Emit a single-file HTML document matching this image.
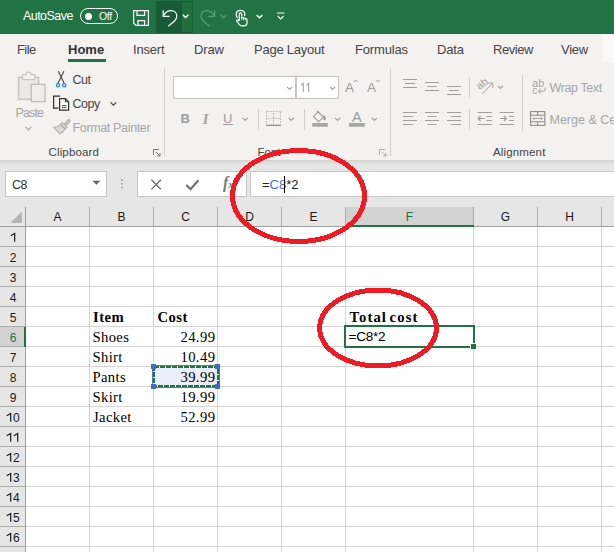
<!DOCTYPE html>
<html>
<head>
<meta charset="utf-8">
<title>Excel</title>
<style>
html,body{margin:0;padding:0;}
body{width:614px;height:552px;overflow:hidden;position:relative;background:#fff;font-family:"Liberation Sans",sans-serif;}
.abs{position:absolute;}
.t{position:absolute;white-space:nowrap;line-height:1;}
.tab{font-size:13px;color:#444;top:43px;}
.rl{font-size:12.5px;color:#444;}
.gl{font-size:11.5px;color:#444;top:147px;}
.dis{color:#a6a6a6;}
.box{position:absolute;background:#fff;border:1px solid #c4c4c4;box-sizing:border-box;}
.ch{position:absolute;top:207px;height:20px;font-size:12px;color:#1a1a1a;text-align:center;line-height:21px;}
.rh{position:absolute;left:0.5px;width:25px;height:20px;font-size:12px;color:#1a1a1a;text-align:center;line-height:22px;}
.cell{position:absolute;font-family:"Liberation Serif",serif;font-size:14.67px;color:#000;line-height:20px;height:20px;white-space:nowrap;letter-spacing:0.35px;}
.b{font-weight:bold;letter-spacing:0.45px;}
.r{text-align:right;}
</style>
</head>
<body>

<div class="abs" style="left:0;top:0;width:614px;height:34px;background:#217346;"></div>
<div class="abs" style="left:0;top:34px;width:614px;height:126px;background:#f3f2f1;"></div>
<div class="abs" style="left:603px;top:34px;width:11px;height:28px;background:#faf9f8;"></div>
<div class="abs" style="left:0;top:160px;width:614px;height:47px;background:#e6e6e6;"></div>
<div class="abs" style="left:0;top:160px;width:614px;height:5px;background:linear-gradient(#d2d2d2,#dcdcdc 40%,#e6e6e6);"></div>

<div class="abs" style="left:156px;top:1px;width:37px;height:32px;background:#185c37;"></div>
<div class="abs" style="left:182px;top:2px;width:10px;height:30px;background:#20703f;"></div>
<div class="t" style="left:23px;top:10px;font-size:12.5px;color:#fff;letter-spacing:-0.55px;">AutoSave</div>
<div class="abs" style="left:80px;top:8px;width:38px;height:16px;border:1px solid #fff;border-radius:8px;box-sizing:border-box;"></div>
<div class="abs" style="left:84.5px;top:12.5px;width:7px;height:7px;border-radius:3.5px;background:#fff;"></div>
<div class="t" style="left:99px;top:11px;font-size:10.5px;color:#fff;letter-spacing:-0.3px;">Off</div>

<div class="t tab" style="left:17px;letter-spacing:-0.6px;">File</div>
<div class="t tab" style="left:68px;font-weight:bold;color:#333;">Home</div>
<div class="abs" style="left:68px;top:59px;width:38px;height:3px;background:#217346;"></div>
<div class="t tab" style="left:133px;letter-spacing:-0.2px;">Insert</div>
<div class="t tab" style="left:194px;letter-spacing:-0.15px;">Draw</div>
<div class="t tab" style="left:254px;letter-spacing:-0.25px;">Page Layout</div>
<div class="t tab" style="left:355px;letter-spacing:-0.17px;">Formulas</div>
<div class="t tab" style="left:437px;letter-spacing:-0.2px;">Data</div>
<div class="t tab" style="left:493px;letter-spacing:-0.43px;">Review</div>
<div class="t tab" style="left:561px;letter-spacing:-0.27px;">View</div>

<div class="t rl dis" style="left:15.5px;top:107px;letter-spacing:-0.85px;">Paste</div>
<div class="t rl" style="left:72.5px;top:74px;letter-spacing:-0.55px;">Cut</div>
<div class="t rl" style="left:72.5px;top:98px;letter-spacing:-0.5px;">Copy</div>
<div class="t rl dis" style="left:72.5px;top:121.5px;letter-spacing:-0.35px;">Format Painter</div>
<div class="t gl" style="left:48.5px;letter-spacing:0.15px;">Clipboard</div>
<div class="abs" style="left:164px;top:68px;width:1px;height:88px;background:#d2d0ce;"></div>
<div class="box" style="left:173px;top:76px;width:123px;height:23px;"></div>
<div class="box" style="left:296px;top:76px;width:43px;height:23px;"></div>
<div class="t gl" style="left:257.5px;">Font</div>
<div class="abs" style="left:390px;top:68px;width:1px;height:88px;background:#d2d0ce;"></div>
<div class="t rl dis" style="left:549.5px;top:81.5px;letter-spacing:-0.4px;">Wrap Text</div>
<div class="t rl dis" style="left:549.5px;top:113.5px;">Merge &amp; Center</div>
<div class="t gl" style="left:493px;letter-spacing:0.15px;">Alignment</div>
<div class="t" style="left:180.5px;top:112px;font-size:13px;font-weight:bold;color:#9c9c9c;">B</div>
<div class="t" style="left:202.5px;top:110.5px;font-size:15.5px;font-style:italic;font-weight:bold;font-family:'Liberation Serif',serif;color:#a6a6a6;">I</div>
<div class="t" style="left:223px;top:111.5px;font-size:13px;color:#9c9c9c;">U</div>
<div class="abs" style="left:223px;top:124px;width:9.5px;height:1px;background:#9c9c9c;"></div>
<div class="t" style="left:345px;top:81px;font-size:13.5px;color:#9c9c9c;">A</div>
<div class="t" style="left:367px;top:81px;font-size:13.5px;color:#9c9c9c;">A</div>
<div class="t" style="left:352px;top:109.5px;font-size:14.5px;color:#9c9c9c;">A</div>

<div class="box" style="left:5px;top:171px;width:102px;height:26px;border-color:#c6c6c6;"></div>
<div class="t" style="left:12px;top:178.5px;font-size:12.5px;color:#333;letter-spacing:-0.5px;">C8</div>
<div class="box" style="left:137px;top:171px;width:110px;height:26px;border-color:#c6c6c6;"></div>
<div class="box" style="left:250px;top:171px;width:370px;height:26px;border-color:#c6c6c6;"></div>
<div class="t" style="left:262px;top:178px;font-size:13px;color:#222;">=<span style="color:#4472c4">C8</span>*2</div>
<div class="abs" style="left:284px;top:176px;width:1px;height:17px;background:#000;"></div>
<div class="t" style="left:223px;top:175px;font-size:16px;font-style:italic;font-weight:bold;font-family:'Liberation Serif',serif;color:#7a7a7a;">f<span style="font-size:11px;">x</span></div>
<svg class="abs" width="614" height="346" style="left:0;top:206px" shape-rendering="crispEdges">
<rect x="0" y="1" width="614" height="20" fill="#e6e6e6"/>
<rect x="0" y="1" width="25" height="345" fill="#e6e6e6"/>
<rect x="346" y="1" width="127" height="20" fill="#d2d2d2"/>
<rect x="0" y="121" width="25" height="20" fill="#d2d2d2"/>
<path d="M26 40.5H614M26 60.5H614M26 80.5H614M26 100.5H614M26 120.5H614M26 140.5H614M26 160.5H614M26 180.5H614M26 200.5H614M26 220.5H614M26 240.5H614M26 260.5H614M26 280.5H614M26 300.5H614M26 320.5H614M26 340.5H614M89.5 21V346M153.5 21V346M217.5 21V346M281.5 21V346M345.5 21V346M473.5 21V346M537.5 21V346M601.5 21V346" stroke="#d4d4d4" stroke-width="1" fill="none"/>
<path d="M89.5 1V20M153.5 1V20M217.5 1V20M281.5 1V20M345.5 1V20M473.5 1V20M537.5 1V20M601.5 1V20M0 40.5H25M0 60.5H25M0 80.5H25M0 100.5H25M0 120.5H25M0 140.5H25M0 160.5H25M0 180.5H25M0 200.5H25M0 220.5H25M0 240.5H25M0 260.5H25M0 280.5H25M0 300.5H25M0 320.5H25M0 340.5H25" stroke="#ababab" stroke-width="1" fill="none"/>
<path d="M0 20.5H614M25.5 1V346" stroke="#a0a0a0" stroke-width="1" fill="none"/>
<polygon points="10.5,17 22,17 22,5.5" fill="#b4b4b4" shape-rendering="auto"/>
<rect x="346" y="19" width="128" height="2" fill="#217346"/>
<rect x="24" y="121" width="2" height="20" fill="#217346"/>
</svg><div class="ch" style="left:26px;width:63px;">A</div>
<div class="ch" style="left:90px;width:63px;">B</div>
<div class="ch" style="left:154px;width:63px;">C</div>
<div class="ch" style="left:218px;width:63px;">D</div>
<div class="ch" style="left:282px;width:63px;">E</div>
<div class="ch" style="left:346px;width:127px;color:#217346;">F</div>
<div class="ch" style="left:474px;width:63px;">G</div>
<div class="ch" style="left:538px;width:63px;">H</div>
<div class="rh" style="top:227px;"><svg width="6.67" height="8.7" viewBox="0 0 6.67 8.7" style="vertical-align:baseline;overflow:visible"><path d="M0.7 2.8L4.7 0.5V8.7" fill="none" stroke="#1a1a1a" stroke-width="1.2"/></svg></div>
<div class="rh" style="top:247px;">2</div>
<div class="rh" style="top:267px;">3</div>
<div class="rh" style="top:287px;">4</div>
<div class="rh" style="top:307px;">5</div>
<div class="rh" style="top:327px;color:#217346;">6</div>
<div class="rh" style="top:347px;">7</div>
<div class="rh" style="top:367px;">8</div>
<div class="rh" style="top:387px;">9</div>
<div class="rh" style="top:407px;"><svg width="6.67" height="8.7" viewBox="0 0 6.67 8.7" style="vertical-align:baseline;overflow:visible"><path d="M0.7 2.8L4.7 0.5V8.7" fill="none" stroke="#1a1a1a" stroke-width="1.2"/></svg>0</div>
<div class="rh" style="top:427px;"><svg width="6.67" height="8.7" viewBox="0 0 6.67 8.7" style="vertical-align:baseline;overflow:visible"><path d="M0.7 2.8L4.7 0.5V8.7" fill="none" stroke="#1a1a1a" stroke-width="1.2"/></svg><svg width="6.67" height="8.7" viewBox="0 0 6.67 8.7" style="vertical-align:baseline;overflow:visible"><path d="M0.7 2.8L4.7 0.5V8.7" fill="none" stroke="#1a1a1a" stroke-width="1.2"/></svg></div>
<div class="rh" style="top:447px;"><svg width="6.67" height="8.7" viewBox="0 0 6.67 8.7" style="vertical-align:baseline;overflow:visible"><path d="M0.7 2.8L4.7 0.5V8.7" fill="none" stroke="#1a1a1a" stroke-width="1.2"/></svg>2</div>
<div class="rh" style="top:467px;"><svg width="6.67" height="8.7" viewBox="0 0 6.67 8.7" style="vertical-align:baseline;overflow:visible"><path d="M0.7 2.8L4.7 0.5V8.7" fill="none" stroke="#1a1a1a" stroke-width="1.2"/></svg>3</div>
<div class="rh" style="top:487px;"><svg width="6.67" height="8.7" viewBox="0 0 6.67 8.7" style="vertical-align:baseline;overflow:visible"><path d="M0.7 2.8L4.7 0.5V8.7" fill="none" stroke="#1a1a1a" stroke-width="1.2"/></svg>4</div>
<div class="rh" style="top:507px;"><svg width="6.67" height="8.7" viewBox="0 0 6.67 8.7" style="vertical-align:baseline;overflow:visible"><path d="M0.7 2.8L4.7 0.5V8.7" fill="none" stroke="#1a1a1a" stroke-width="1.2"/></svg>5</div>
<div class="rh" style="top:527px;"><svg width="6.67" height="8.7" viewBox="0 0 6.67 8.7" style="vertical-align:baseline;overflow:visible"><path d="M0.7 2.8L4.7 0.5V8.7" fill="none" stroke="#1a1a1a" stroke-width="1.2"/></svg>6</div>
<div class="rh" style="top:547px;"><svg width="6.67" height="8.7" viewBox="0 0 6.67 8.7" style="vertical-align:baseline;overflow:visible"><path d="M0.7 2.8L4.7 0.5V8.7" fill="none" stroke="#1a1a1a" stroke-width="1.2"/></svg>7</div>

<div class="cell b" style="left:93px;top:307px;">Item</div>
<div class="cell b" style="left:157.5px;top:307px;">Cost</div>
<div class="cell" style="left:92.5px;top:327px;">Shoes</div>
<div class="cell" style="left:92.5px;top:347px;">Shirt</div>
<div class="cell" style="left:92.5px;top:367px;">Pants</div>
<div class="cell" style="left:92.5px;top:387px;">Skirt</div>
<div class="cell" style="left:93px;top:407px;">Jacket</div>
<svg class="abs" width="80" height="40" style="left:145px;top:358px;">
<rect x="8" y="8" width="66" height="22" fill="#e9eef9"/>
<rect x="7.5" y="7.5" width="67" height="22" fill="none" stroke="#4a78cf" stroke-width="1"/>
<rect x="9" y="9" width="64" height="19" fill="none" stroke="#217346" stroke-width="2" stroke-dasharray="5 1"/>
<rect x="6" y="6" width="5" height="5" fill="#3b6ec9"/><rect x="70" y="6" width="5" height="5" fill="#3b6ec9"/>
<rect x="6" y="26" width="5" height="5" fill="#3b6ec9"/><rect x="70" y="26" width="5" height="5" fill="#3b6ec9"/>
</svg>
<div class="cell r" style="left:153px;width:62.4px;letter-spacing:0.4px;top:327px;">24.99</div>
<div class="cell r" style="left:153px;width:62.4px;letter-spacing:0.4px;top:347px;">10.49</div>
<div class="cell r" style="left:153px;width:62.4px;letter-spacing:0.4px;top:367px;">39.99</div>
<div class="cell r" style="left:153px;width:62.4px;letter-spacing:0.4px;top:387px;">19.99</div>
<div class="cell r" style="left:153px;width:62.4px;letter-spacing:0.4px;top:407px;">52.99</div>
<div class="cell b" style="left:349.5px;top:307px;letter-spacing:1.1px;word-spacing:-2.2px;">Total cost</div>
<div class="abs" style="left:344px;top:325px;width:131px;height:23px;border:2px solid #217346;box-sizing:border-box;background:#fff;"></div>
<div class="abs" style="left:470px;top:343px;width:6px;height:6px;background:#fff;"></div>
<div class="abs" style="left:471px;top:344px;width:5px;height:5px;background:#217346;"></div>
<div class="cell" style="left:348.5px;top:327px;font-family:'Liberation Sans',sans-serif;font-size:13.6px;letter-spacing:-0.3px;">=C8*2</div>
<svg class="abs" width="614" height="210" style="left:0;top:0;" fill="none" stroke-linecap="butt">
<!-- title bar icons -->
<g stroke="#fff" stroke-width="1.2">
<path d="M133.6 10.6H148.4V25.4H136L133.6 23Z"/>
<path d="M137 10.6V15.4H144.6V10.6M138 25.4V20.6H144.6V25.4"/>
<path d="M163.2 10.3V16.4H169.6"/>
<path d="M163.5 16C165 12.6 168 10.6 171 10.6C174.5 10.6 176.8 13 176.8 16C176.8 18 176 19.5 174.5 21L168.3 26.2"/>
<path d="M182.8 14.7L185.6 17.5L188.4 14.7" stroke-width="1.4"/>
<path d="M256.7 14.9L259.5 17.7L262.3 14.9" stroke-width="1.4"/>
<path d="M277 13H284.4M277.8 16L280.7 18.9L283.6 16" stroke-width="1.1"/>
<!-- touch -->
<path d="M237.6 17.6C236.6 16.7 236.2 15.6 236.2 14.4C236.2 12 238.1 10.4 240.5 10.4C242.9 10.4 244.8 12 244.8 14.4C244.8 15 244.7 15.5 244.5 16"/>
<path d="M239.3 21V14.2C239.3 13.4 239.8 12.9 240.5 12.9C241.2 12.9 241.7 13.4 241.7 14.2V17.6L245.6 18.4C246.5 18.6 247 19.2 247 20V22.5C247 24.5 245.5 25.8 243.8 25.8H241.8C240.8 25.8 240 25.4 239.4 24.6L236.8 21.2C236.4 20.6 236.6 20 237.2 19.8C237.8 19.6 238.3 19.9 238.7 20.3L239.3 21"/>
<path d="M241.7 17.6V20M243.5 18V20.2M245.3 18.5V20.4" stroke-width="0.8"/>
</g>
<g stroke="#5a9e7a" stroke-width="1.2">
<path d="M214.6 10.3V16.4H208.2"/>
<path d="M214.3 16C212.8 12.6 209.8 10.6 206.8 10.6C203.3 10.6 201 13 201 16C201 18 201.8 19.5 203.3 21L209.5 26.2"/>
<path d="M220.7 14.9L223.5 17.7L226.3 14.9" stroke-width="1.4"/>
</g>

<!-- Paste icon -->
<rect x="18.6" y="77.3" width="20" height="22" fill="#eae9e8" stroke="#c8c6c4" stroke-width="1.6"/>
<path d="M22.6 79.6V74.6H26.1C26.1 73.1 27.2 72.2 28.6 72.2C30 72.2 31.1 73.1 31.1 74.6H34.7V79.6Z" fill="#f3f2f1" stroke="#c8c6c4" stroke-width="1.2"/>
<rect x="31.2" y="84.3" width="13.8" height="17.4" fill="#eeedec" stroke="#b5b3b1" stroke-width="1.1"/>
<path d="M25.6 127L28.4 129.8L31.2 127" stroke="#a6a6a6" stroke-width="1.2"/>
<!-- scissors -->
<g stroke="#484644" stroke-width="1.1">
<path d="M58.3 71.3L64.3 83.6M63.9 71.3L57.9 83.6"/>
</g>
<circle cx="58" cy="85.2" r="1.6" stroke="#2b88d8" stroke-width="1.3"/>
<circle cx="64.2" cy="85.2" r="1.6" stroke="#2b88d8" stroke-width="1.3"/>
<!-- copy -->
<g stroke="#323130" stroke-width="1.2">
<path d="M60.2 96.1H53.6V108.1H58.6"/>
<path d="M59.6 98.6H65.4L68.6 101.8V110.1H59.6Z" fill="#fff"/>
<path d="M65.4 98.6V101.8H68.6" stroke-width="1"/>
<path d="M62 105.6H66.4M62 107.6H66.4" stroke-width="0.9"/>
<path d="M110.6 102.4L113.4 105.2L116.2 102.4" stroke="#484644" stroke-width="1.3"/>
</g>
<!-- format painter -->
<g stroke="#b3b1af" stroke-width="1.1" fill="#dcdad8">
<path d="M64.2 124.4L67.6 120.4C68.2 119.7 69 119.7 69.4 120.2C69.9 120.7 69.8 121.4 69.2 122L65.6 125.6" fill="none" stroke-width="1.6"/>
<path d="M62.2 122.6L67 127.2L65.2 129L60.4 124.4Z"/>
<path d="M60.2 124.6L65 129.2C64 131 62 133 59.8 133.6L53.8 127.4C56.5 127.4 58.6 126.4 60.2 124.6Z"/>
</g>
<!-- dialog launchers -->
<g stroke="#7a7876" stroke-width="1">
<path d="M153.5 155V149.5H159M156 152L159.8 155.8M160 153V156H157"/>
</g>
<g stroke="#b3b1af" stroke-width="1">
<path d="M379.5 155V149.5H385M382 152L385.8 155.8M386 153V156H383"/>
</g>
<!-- separators -->
<g stroke="#d0cecc" stroke-width="1">
<path d="M258.5 109V129.5M304.5 109V129.5M469.5 77.5V97.5M469.5 109V129.5M522.5 74.5V131.5"/>
</g>
<!-- chevrons ribbon (disabled) -->
<g stroke="#a19f9d" stroke-width="1.1">
<path d="M287 86.8L289.6 89.4L292.2 86.8M330 86.8L332.6 89.4L335.2 86.8"/>
<path d="M242.6 117.8L245.2 120.4L247.8 117.8M288.7 117.8L291.3 120.4L293.9 117.8M335.1 117.8L337.7 120.4L340.3 117.8M371.7 117.8L374.3 120.4L376.9 117.8"/>
<path d="M497.8 85.8L500.4 88.4L503 85.8"/>
<path d="M353.8 82L355.8 80L357.8 82M375.8 80L377.8 82L379.8 80" stroke-width="1"/>
</g>
<path d="M301 85.4L303.3 83.3V91.9M306.4 85.4L308.7 83.3V91.9" stroke="#a6a4a2" stroke-width="1.1" stroke-linejoin="miter"/>
<!-- borders icon -->
<g stroke="#bdbbb9" stroke-width="1" stroke-dasharray="2 1.2">
<path d="M266.5 111.5H280.5M266.5 111.5V124M280.5 111.5V124M273.5 113V124M268 118.5H280"/>
</g>
<path d="M266 125.3H281" stroke="#8a8886" stroke-width="1.2"/>
<!-- fill bucket -->
<g stroke="#a19f9d" stroke-width="1.1">
<path d="M317.5 111.2L323.4 117.1L318.6 121.7L313.4 116.5L318.3 111.8" />
<path d="M316.5 112.3C316.5 110.8 319 110.8 319 112.3V114.5" stroke-width="0.9"/>
<path d="M324 115.5C325.5 117 326 118.5 325.2 119.6C324.4 120.4 323.4 119.8 323.6 118.6Z" fill="#a19f9d" stroke-width="0.7"/>
</g>
<rect x="312.3" y="123" width="15.5" height="3.7" fill="#a6a4a2"/>
<rect x="349" y="123" width="15.8" height="3.7" fill="#a6a4a2"/>
<!-- alignment -->
<g stroke="#a19f9d" stroke-width="1.1">
<path d="M403 79.5H417M405 83.5H415M403 87.5H417"/>
<path d="M425 82.5H439M427.5 86.5H436.5M425 90.5H439"/>
<path d="M447 86.5H461M449.2 90.5H458.8M447 94.5H461"/>
<path d="M403 112.5H417M403 116.5H413M403 120.5H417M403 124.5H413"/>
<path d="M425 112.5H439M427.5 116.5H436.5M425 120.5H439M427.5 124.5H436.5"/>
<path d="M447 112.5H461M451 116.5H461M447 120.5H461M451 124.5H461"/>
<path d="M477.5 112.5H492M477.5 124.5H492M486.5 116.5H492M486.5 120.5H492M484.5 118.5H478.2M480.6 116L478.1 118.5L480.6 121"/>
<path d="M499.7 112.5H514M499.7 124.5H514M509 116.5H514M509 120.5H514M500 118.5H506.3M503.9 116L506.4 118.5L503.9 121"/>
<!-- orientation arrow -->
<path d="M482 93.8L492.6 83.2M488 83H492.8V87.8" stroke-width="1"/>
<!-- wrap arrow -->
<path d="M545.2 87.6V89C545.2 90.4 544.4 91.2 543 91.2H538.6M540.8 88.8L538.4 91.2L540.8 93.6" stroke-width="1"/>
</g>
<text x="0" y="0" transform="translate(479.6 90) rotate(-38)" font-family="Liberation Sans, sans-serif" font-size="10.5" fill="#a19f9d" stroke="none">ab</text>
<text x="532.3" y="86.8" font-family="Liberation Sans, sans-serif" font-size="10.5" fill="#a19f9d" stroke="none">ab</text>
<text x="532.3" y="94.2" font-family="Liberation Sans, sans-serif" font-size="10.5" fill="#a19f9d" stroke="none">c</text>
<!-- merge icon -->
<g stroke="#8f8d8b" stroke-width="1.1">
<rect x="530.6" y="111.6" width="14.2" height="13.8"/>
<path d="M530.6 115.2H544.8M530.6 121.8H544.8M537.7 111.6V115.2M537.7 121.8V125.4"/>
<path d="M533 118.5H542.4M534.6 116.9L533 118.5L534.6 120.1M540.8 116.9L542.4 118.5L540.8 120.1" stroke="#a19f9d" stroke-width="0.9"/>
</g>
<!-- formula bar -->
<polygon points="92.4,180.7 100.4,180.7 96.4,184.7" fill="#666" stroke="none"/>
<g fill="#a6a6a6" stroke="none"><rect x="121" y="179.2" width="1.8" height="1.8"/><rect x="121" y="183" width="1.8" height="1.8"/><rect x="121" y="186.8" width="1.8" height="1.8"/></g>
<path d="M151.4 179.8L161 189.4M161 179.8L151.4 189.4" stroke="#6a6a6a" stroke-width="1.3"/>
<path d="M186.3 185L190.6 189.3L198.4 180.3" stroke="#707070" stroke-width="2.1"/>
</svg>

<svg class="abs" width="614" height="552" style="left:0;top:0;" shape-rendering="crispEdges">
<ellipse cx="298.5" cy="196" rx="66" ry="45.5" fill="none" stroke="#ed1c24" stroke-width="5"/>
<ellipse cx="378.05" cy="328" rx="58.35" ry="38" fill="none" stroke="#ed1c24" stroke-width="5"/>
</svg>
</body>
</html>
